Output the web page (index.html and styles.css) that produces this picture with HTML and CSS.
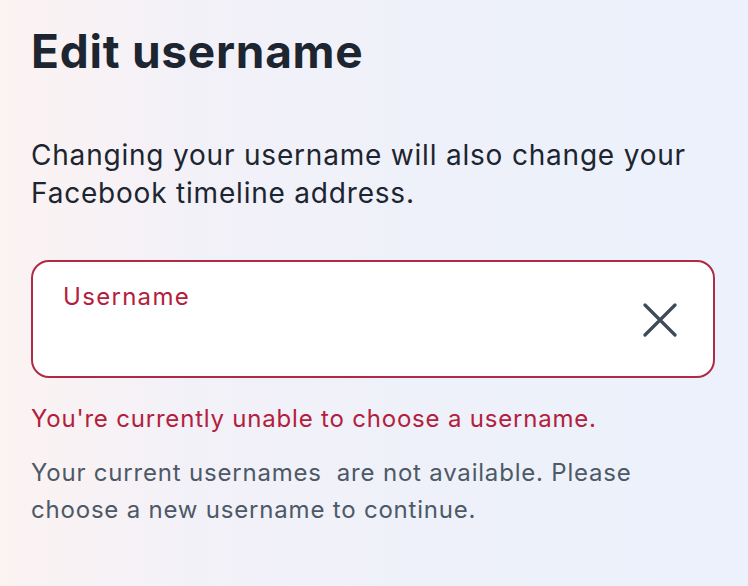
FILE: index.html
```html
<!DOCTYPE html>
<html lang="en">
<head>
<meta charset="utf-8">
<title>Edit username</title>
<link rel="stylesheet" href="styles.css">
</head>
<body>
<main class="page">
  <h1 class="title">Edit username</h1>
  <p class="intro">Changing your username will also change your Facebook timeline address.</p>
  <div class="field">
    <div class="field-body">
      <label class="field-label">Username</label>
      <div class="field-value"></div>
    </div>
    <button class="clear" aria-label="Clear">
      <svg width="34" height="34" viewBox="0 0 34 34" aria-hidden="true">
        <path d="M2 2 L32 32 M32 2 L2 32" stroke="#3e4b58" stroke-width="3.2" stroke-linecap="round" fill="none"/>
      </svg>
    </button>
  </div>
  <p class="error">You're currently unable to choose a username.</p>
  <p class="help">Your current usernames&nbsp; are not available. Please choose a new username to continue.</p>
</main>
</body>
</html>
```
FILE: styles.css
```css
html, body {
  margin: 0;
  height: 100%;
}
body {
  background: linear-gradient(90deg, #fcf3f2 0%, #f3f1f8 25%, #eef1fa 60%, #ecf1fb 100%);
  font-family: Inter, Roboto, "Liberation Sans", sans-serif;
  color: #1c2530;
}
.page {
  padding: 24px 33px 0 31px;
  display: flex;
  flex-direction: column;
}
.title {
  margin: 0;
  font-size: 46px;
  font-weight: 700;
  line-height: 54px;
  color: #1c2530;
  letter-spacing: 0.75px;
}
.intro {
  margin: 58px 0 0 0;
  font-size: 28px;
  line-height: 38px;
  color: #1c2530;
  letter-spacing: 0.8px;
}
.field {
  margin-top: 48px;
  height: 114px;
  background: #fff;
  border: 2px solid #b02a45;
  border-radius: 18px;
  display: flex;
  align-items: center;
  padding: 0 36px 0 30px;
}
.field-body {
  flex: 1;
  align-self: flex-start;
  padding-top: 21px;
}
.field-label {
  display: block;
  font-size: 24px;
  line-height: 28px;
  color: #b3203d;
  letter-spacing: 1.3px;
}
.clear {
  border: 0;
  background: none;
  padding: 0;
  margin-top: 2px;
  display: flex;
}
.error {
  margin: 26px 0 0 0;
  font-size: 24px;
  line-height: 30px;
  color: #b3203d;
  letter-spacing: 0.8px;
}
.help {
  margin: 20px 0 0 0;
  font-size: 24px;
  line-height: 37px;
  color: #4d5966;
  letter-spacing: 0.8px;
}
```
